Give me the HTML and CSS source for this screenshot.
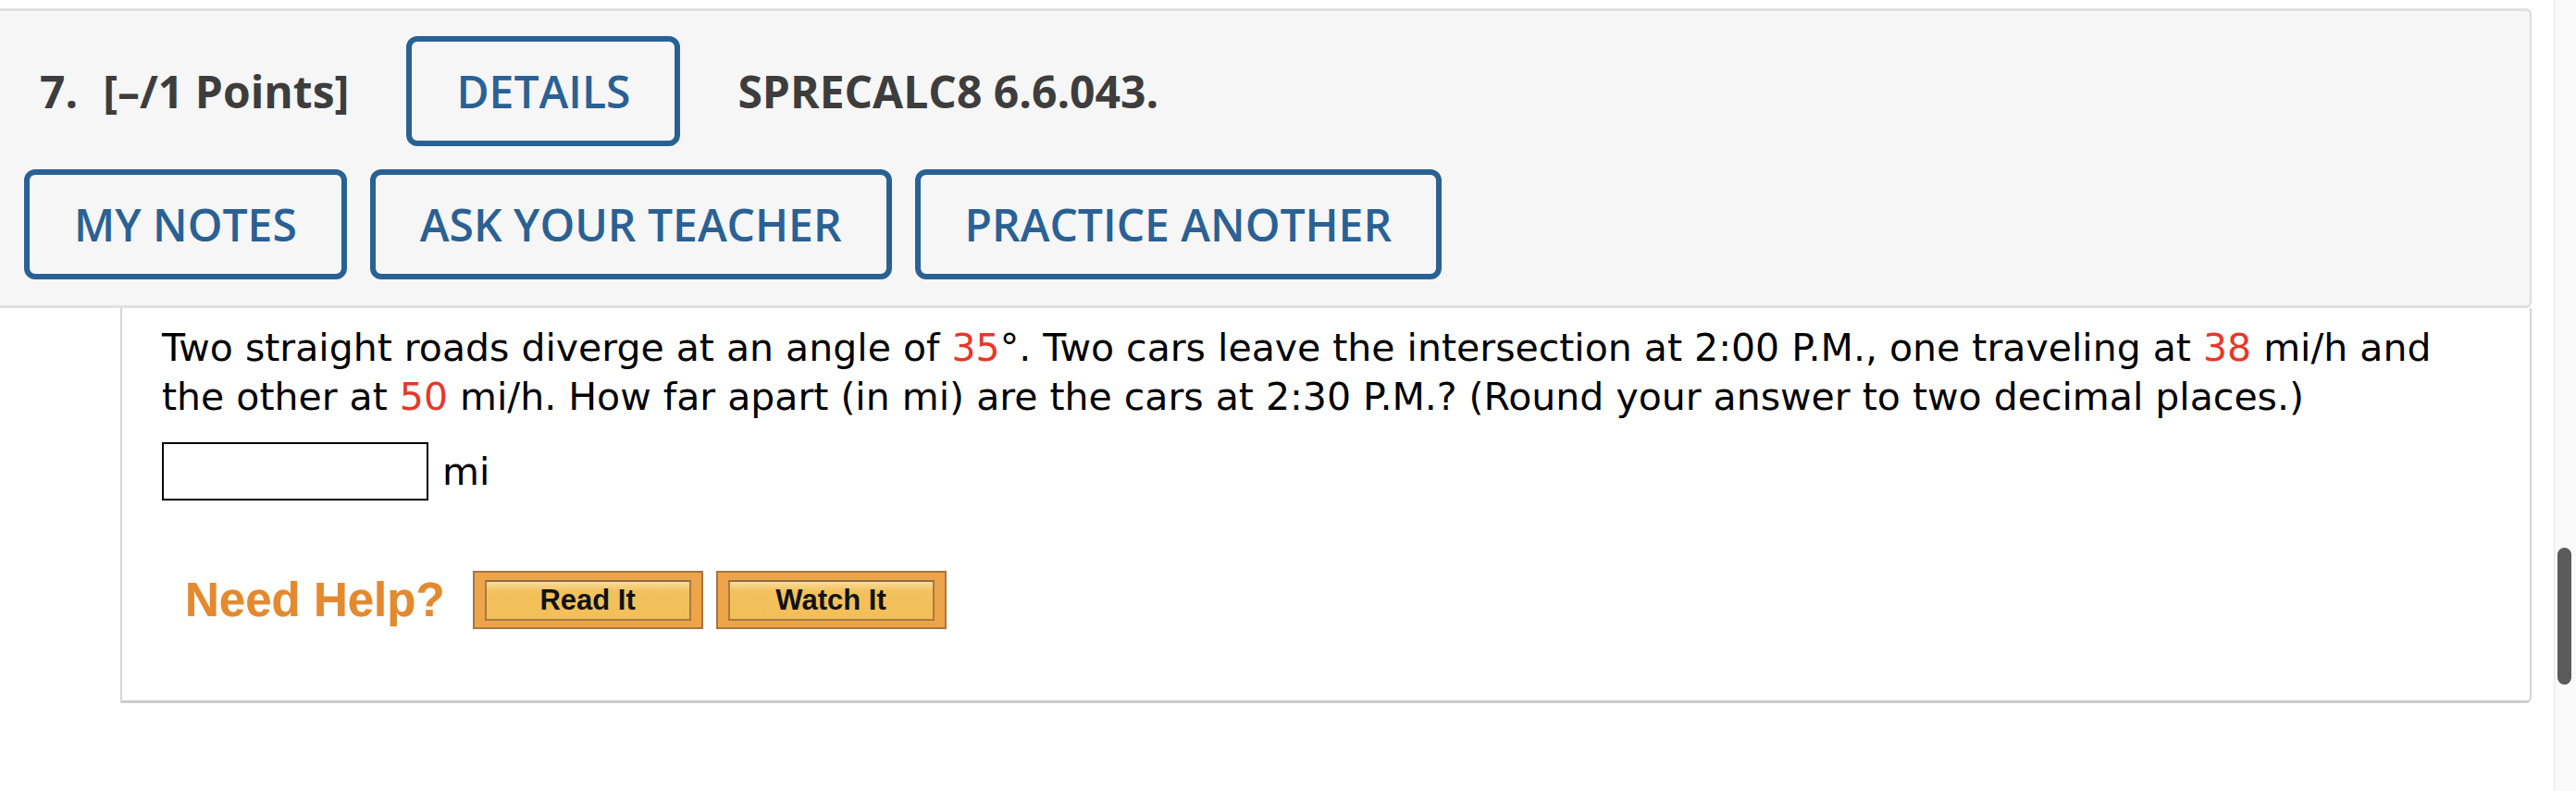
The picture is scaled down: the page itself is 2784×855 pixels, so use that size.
FILE: index.html
```html
<!DOCTYPE html>
<html lang="en">
<head>
<meta charset="utf-8">
<title>Question 7</title>
<link rel="stylesheet" href="styles.css">
</head>
<body>
<div class="page">
  <main class="main">
    <section class="question">
      <div class="qhead">
        <div class="row row-top">
          <span class="qnum">7.</span>
          <span class="qpoints">[&ndash;/1 Points]</span>
          <button class="btn btn-details">DETAILS</button>
          <span class="qcode">SPRECALC8 6.6.043.</span>
        </div>
        <div class="row row-actions">
          <button class="btn">MY NOTES</button>
          <button class="btn">ASK YOUR TEACHER</button>
          <button class="btn">PRACTICE ANOTHER</button>
        </div>
      </div>
      <div class="qbody">
        <p class="qtext">Two straight roads diverge at an angle of <span class="red">35</span>&deg;. Two cars leave the intersection at 2:00 P.M., one traveling at <span class="red">38</span> mi/h and the other at <span class="red">50</span> mi/h. How far apart (in mi) are the cars at 2:30 P.M.? (Round your answer to two decimal places.)</p>
        <div class="answer">
          <span class="ansbox"></span>
          <span class="unit">mi</span>
        </div>
        <div class="help">
          <span class="need">Need Help?</span>
          <span class="hbtn"><span class="hbtn-inner">Read It</span></span>
          <span class="hbtn"><span class="hbtn-inner">Watch It</span></span>
        </div>
      </div>
    </section>
  </main>
  <aside class="scrollbar"><div class="thumb"></div></aside>
</div>
</body>
</html>
```

FILE: styles.css
```css
html, body {
  margin: 0;
  padding: 0;
  background: #ffffff;
}

.page {
  display: flex;
  width: 2784px;
  height: 855px;
  overflow: hidden;
}

.main {
  width: 2760px;
  flex: 0 0 2760px;
}

.question {
  width: 2736px;
  margin-top: 9px;
}

.qhead {
  box-sizing: border-box;
  width: 2736px;
  background: #f6f6f6;
  border-top: 3px solid #e0e0e0;
  border-right: 2px solid #dcdcdc;
  border-bottom: 3px solid #e0e0e0;
  border-radius: 0 6px 6px 0;
  padding: 27px 26px 28px 26px;
  font-family: "Open Sans", "Liberation Sans", sans-serif;
}

.row {
  display: flex;
  align-items: center;
}

.row-top {
  padding-left: 17px;
}

.row-actions {
  margin-top: 25px;
  gap: 25px;
}

.qnum, .qpoints, .qcode {
  font-size: 48px;
  font-weight: 700;
  color: #3d3d3d;
}

.qnum {
  margin-right: 27px;
}

.qpoints {
  margin-right: 62px;
}

.btn {
  box-sizing: border-box;
  height: 119px;
  padding: 0 48px;
  background: transparent;
  border: 6px solid #2a6195;
  border-radius: 12px;
  font-family: "Open Sans", "Liberation Sans", sans-serif;
  font-size: 48px;
  font-weight: 600;
  color: #2a6195;
  line-height: 1;
}

.btn-details {
  margin-right: 62px;
}

.qbody {
  box-sizing: border-box;
  margin-left: 130px;
  width: 2606px;
  border-left: 2px solid #d5d5d5;
  border-right: 2px solid #d5d5d5;
  border-bottom: 3px solid #cccccc;
  border-radius: 0 0 6px 0;
  padding: 17px 60px 77px 43px;
  font-family: "DejaVu Sans", Verdana, sans-serif;
  color: #000;
}

.qtext {
  margin: 0;
  font-size: 41px;
  line-height: 53px;
}

.red {
  color: #e8372a;
}

.answer {
  display: flex;
  align-items: center;
  margin-top: 22px;
  gap: 15px;
}

.ansbox {
  box-sizing: border-box;
  width: 288px;
  height: 63px;
  border: 2px solid #000;
  background: #fff;
}

.unit {
  font-size: 41px;
  line-height: 53px;
  padding-top: 2px;
}

.help {
  display: flex;
  align-items: center;
  margin-top: 76px;
  padding-left: 25px;
}

.need {
  font-family: "Liberation Sans", Arial, sans-serif;
  font-weight: 700;
  font-size: 51px;
  color: #e3892f;
  margin-right: 30px;
  text-shadow: 0 0 1px rgba(227, 137, 47, 0.6);
}

.hbtn {
  box-sizing: border-box;
  display: flex;
  width: 249px;
  height: 63px;
  margin-right: 14px;
  border: 2px solid #a47644;
  background: #eea449;
  padding: 8px 11px 7px 11px;
}

.hbtn-inner {
  flex: 1;
  display: flex;
  align-items: center;
  justify-content: center;
  border: 2px solid #a57a46;
  border-top-color: #8c6c44;
  background: linear-gradient(#f8dc9c 0, #f3c15d 25%, #f2bf58 100%);
  font-family: "Liberation Sans", Arial, sans-serif;
  font-weight: 700;
  font-size: 31px;
  color: #111;
}

.scrollbar {
  box-sizing: border-box;
  flex: 0 0 24px;
  width: 24px;
  height: 855px;
  background: #fafafa;
  border-left: 1px solid #e6e6e6;
  padding-top: 592px;
  padding-left: 3px;
}

.thumb {
  width: 15px;
  height: 148px;
  border-radius: 8px;
  background: #5b5b5b;
}
```
